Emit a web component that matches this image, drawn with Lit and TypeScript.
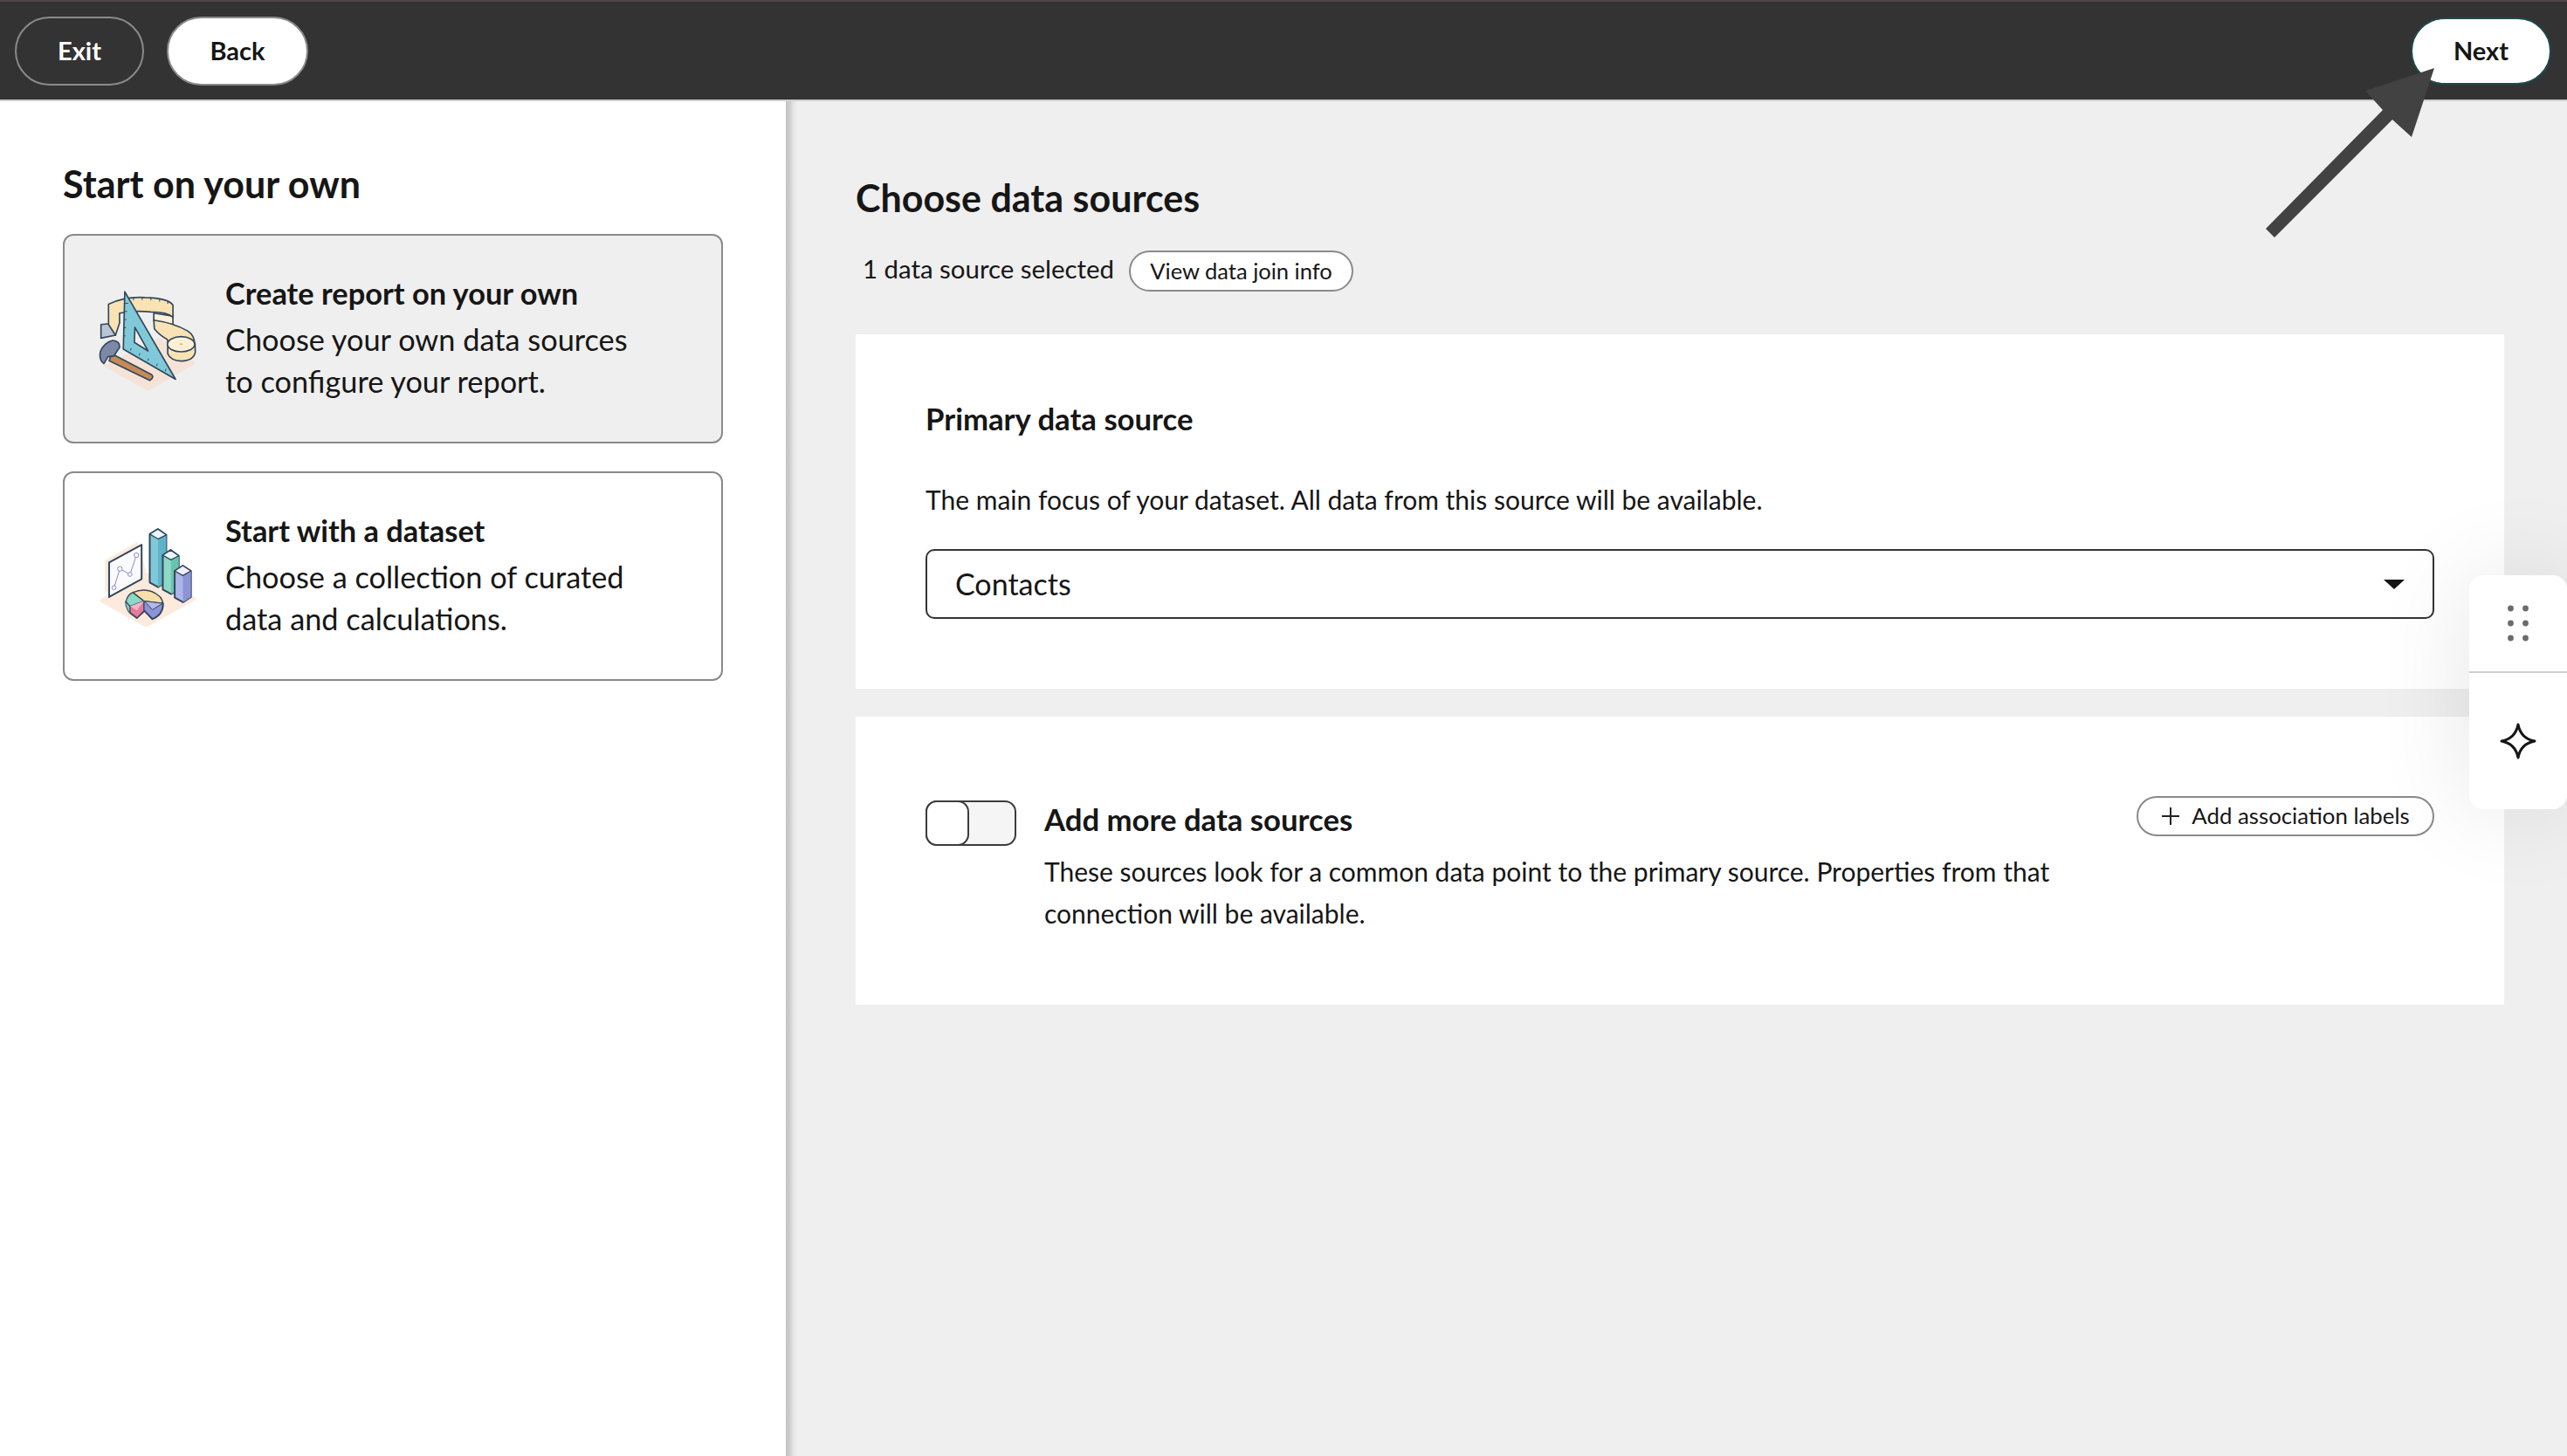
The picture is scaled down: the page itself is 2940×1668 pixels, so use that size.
import { LitElement, html, css, svg } from "lit";
import { customElement } from "lit/decorators.js";

const ink = "#33475b";

const toolsArt = html`<svg class="art" viewBox="160 204 340 360" aria-hidden="true">
  ${svg`
  <path d="M175 478 L370 380 L490 462 Q494 470 486 474 L338 560 Q330 564 322 560 Z" fill="#f5e3d8"/>
  <path d="M168 335 L200 332 L218 372 L168 382 Z" fill="#b9c4d8" stroke="${ink}" stroke-width="5" stroke-linejoin="round"/>
  <path d="M350 296 L416 306 L416 336 L350 322 Z" fill="#fdf1d8" stroke="${ink}" stroke-width="5" stroke-linejoin="round"/>
  <path d="M194 265 Q250 238 320 242 Q400 244 416 268 L416 310 Q396 292 340 292 Q285 286 232 296 L232 330 L218 372 L194 335 Z" fill="#f9e3b4" stroke="${ink}" stroke-width="5" stroke-linejoin="round"/>
  <path d="M280 243 L280 252 M310 242 L310 251 M340 243 L340 252 M370 247 L370 256 M398 255 L398 264" stroke="${ink}" stroke-width="3"/>
  <path d="M350 320 Q420 330 468 358 Q490 374 490 398 L400 400 L396 386 Q370 372 352 350 Z" fill="#f9e3b4" stroke="${ink}" stroke-width="5" stroke-linejoin="round"/>
  <path d="M398 405 L398 436 Q408 460 445 461 Q488 459 493 430 L492 400 Z" fill="#f9e3b4" stroke="${ink}" stroke-width="5" stroke-linejoin="round"/>
  <ellipse cx="444" cy="403" rx="47" ry="26" fill="#fdf1d8" stroke="${ink}" stroke-width="5"/>
  <ellipse cx="444" cy="403" rx="24" ry="12" fill="none" stroke="#f5e3c0" stroke-width="2"/>
  <ellipse cx="444" cy="403" rx="6" ry="3" fill="#e6b94f"/>
  <path d="M250 222 L425 524 L245 420 Z M285 345 L283 397 L330 426 Z" fill="#7fc9d8" fill-rule="evenodd" stroke="${ink}" stroke-width="5" stroke-linejoin="round"/>
  <path d="M262 262 L251 262 M258 290 L248 290 M256 318 L248 318 M254 346 L247 346 M252 374 L246 374 M270 425 L272 417 M300 442 L302 434 M330 460 L332 452 M360 478 L362 470 M390 496 L392 488" stroke="${ink}" stroke-width="3"/>
  <path d="M205 436 L343 508 Q352 518 336 528 L196 460 Z" fill="#c58a55" stroke="${ink}" stroke-width="5" stroke-linejoin="round"/>
  <path d="M166 428 Q178 398 208 390 Q234 392 232 414 L212 444 L192 446 L178 470 Q160 458 166 428 Z" fill="#7c8aa8" stroke="${ink}" stroke-width="5" stroke-linejoin="round"/>
  `}
</svg>`;

const chartArt = html`<svg class="art" viewBox="160 210 340 360" aria-hidden="true">
  ${svg`
  <path d="M168 470 L330 378 L492 462 Q498 468 490 474 L332 562 Q325 567 316 562 L168 480 Q160 474 168 470 Z" fill="#fdeadd"/>
  <path d="M182 335 L295 272 L330 400 L182 446 Z" fill="#fdeadd"/>
  <path d="M196 343 L308 282 L308 400 L196 462 Z" fill="#fbfbff" stroke="${ink}" stroke-width="6" stroke-linejoin="round"/>
  <path d="M213 430 L233 365 L268 384 L290 318" fill="none" stroke="#8d86cf" stroke-width="3"/>
  <g fill="#fff" stroke="#8d86cf" stroke-width="3">
    <circle cx="213" cy="430" r="7"/><circle cx="233" cy="365" r="8"/><circle cx="268" cy="384" r="7"/><circle cx="290" cy="318" r="8"/>
  </g>
  <path d="M336 245 L364 228 L393 248 L393 410 L365 428 L336 412 Z" fill="#7fc9d8" stroke="${ink}" stroke-width="6" stroke-linejoin="round"/>
  <path d="M365 262 L393 248 L393 410 L365 428 Z" fill="#5fb3c8"/>
  <path d="M336 245 L364 228 L393 248 L365 262 Z" fill="#e6f8fb" stroke="${ink}" stroke-width="4" stroke-linejoin="round"/>
  <path d="M381 318 L408 300 L436 320 L436 435 L410 452 L381 436 Z" fill="#8dd8c6" stroke="${ink}" stroke-width="6" stroke-linejoin="round"/>
  <path d="M409 334 L436 320 L436 435 L410 452 Z" fill="#66c4ae"/>
  <path d="M381 318 L408 300 L436 320 L409 334 Z" fill="#e6f8f2" stroke="${ink}" stroke-width="4" stroke-linejoin="round"/>
  <path d="M422 372 L450 354 L478 372 L478 462 L451 480 L422 464 Z" fill="#aeb6e8" stroke="${ink}" stroke-width="6" stroke-linejoin="round"/>
  <path d="M450 388 L478 372 L478 462 L451 480 Z" fill="#8a94d6"/>
  <path d="M422 372 L450 354 L478 372 L450 388 Z" fill="#eef0fb" stroke="${ink}" stroke-width="4" stroke-linejoin="round"/>
  <path d="M254 478 Q254 500 268 516 L292 534 L318 510 L345 538 Q382 524 382 484 L318 476 Z" fill="#8a94d6" stroke="${ink}" stroke-width="6" stroke-linejoin="round"/>
  <path d="M254 478 Q254 500 268 516 L268 494 Z" fill="#7dd0bb"/>
  <path d="M268 494 L316 476 L316 510 L292 534 L268 516 Z" fill="#e8799a" stroke="${ink}" stroke-width="4" stroke-linejoin="round"/>
  <path d="M254 478 Q258 455 278 446 L316 476 L268 494 Z" fill="#8dd8c6" stroke="${ink}" stroke-width="4" stroke-linejoin="round"/>
  <path d="M278 446 Q330 425 370 460 Q380 470 381 484 L316 476 Z" fill="#f7dfa8" stroke="${ink}" stroke-width="4" stroke-linejoin="round"/>
  <path d="M268 494 L316 476 L292 508 Z" fill="#f3b4c6"/>
  <path d="M318 476 L381 484 L345 506 Z" fill="#b3b9e8" stroke="${ink}" stroke-width="3" stroke-linejoin="round"/>
  `}
</svg>`;

@customElement("app-root")
export class AppRoot extends LitElement {
  static styles = css`
    :host {
      display: flex;
      flex-direction: column;
      position: relative;
      width: 100%;
      min-height: 1668px;
      overflow: hidden;
      font-family: "Lato", "Noto Sans", sans-serif;
      color: #161616;
      background: #efefef;
    }
    .topbar {
      box-sizing: border-box;
      height: 116px;
      display: flex;
      align-items: center;
      gap: 26px;
      padding: 0 18px 0 17px;
      background: #333333;
      border-top: 2px solid #4f4545;
      border-bottom: 2px solid #cfcfcf;
    }
    .pill {
      box-sizing: border-box;
      height: 79px;
      padding-bottom: 2px;
      display: flex;
      align-items: center;
      justify-content: center;
      border-radius: 40px;
      border: 2px solid #8a8a8a;
      font-size: 29px;
      font-weight: 700;
      background: #fff;
      color: #161616;
    }
    .exit { width: 148px; background: transparent; color: #fff; }
    .back { width: 162px; }
    .next { width: 161px; margin-left: auto; border-color: #1d4a4f; height: 77px; }
    .main { flex: 1; display: flex; }
    .left {
      box-sizing: border-box;
      width: 900px;
      flex: none;
      padding: 71px 72px 0;
      background: #fff;
    }
    h1 {
      margin: 0;
      font-size: 43px;
      line-height: 48px;
      font-weight: 700;
    }
    .left h1 { margin-bottom: 33px; }
    .option {
      box-sizing: border-box;
      width: 756px;
      height: 240px;
      display: flex;
      align-items: center;
      gap: 32px;
      padding-left: 39px;
      margin-bottom: 32px;
      border: 2px solid #8a8a8a;
      border-radius: 12px;
      background: #fff;
      font-size: 34.3px;
      line-height: 48px;
    }
    .option.selected { background: #efefef; }
    .option-text { padding-bottom: 3px; }
    .art { width: 113px; height: 120px; flex: none; }
    .option b { display: block; font-size: 34.4px; font-weight: 700; margin: -1px 0 5px; }
    .right {
      flex: 1;
      box-sizing: border-box;
      padding: 87px 72px 0 80px;
      background: linear-gradient(90deg, #c4c4c4 0, #cbcbcb 4px, #e6e6e6 9px, #efefef 14px) no-repeat left top / 14px 100%;
    }
    .summary {
      display: flex;
      align-items: center;
      gap: 17px;
      margin: 36px 0 49px;
      padding-left: 8px;
      font-size: 29.4px;
    }
    .summary span { position: relative; top: -3px; }
    .small-pill {
      box-sizing: border-box;
      height: 47px;
      padding-bottom: 2px;
      display: flex;
      align-items: center;
      justify-content: center;
      border: 2px solid #8a8a8a;
      border-radius: 24px;
      background: #fff;
      font-size: 25.5px;
    }
    .join { width: 257px; }
    .panel { background: #fff; }
    .primary {
      box-sizing: border-box;
      height: 406px;
      padding: 73px 80px 0;
    }
    h2 {
      margin: 0;
      font-size: 34.7px;
      line-height: 48px;
      font-weight: 700;
    }
    .primary p {
      margin: 44px 0 33px;
      font-size: 30px;
      line-height: 48px;
    }
    .select {
      box-sizing: border-box;
      height: 80px;
      display: flex;
      align-items: center;
      justify-content: space-between;
      padding: 0 32px 2px 32px;
      border: 2px solid #333;
      border-radius: 10px;
      font-size: 34px;
    }
    .caret {
      width: 0;
      height: 0;
      margin-top: 2px;
      border-left: 12px solid transparent;
      border-right: 12px solid transparent;
      border-top: 11px solid #161616;
    }
    .more {
      box-sizing: border-box;
      height: 330px;
      margin-top: 32px;
      padding: 91px 80px 0;
      display: flex;
      align-items: flex-start;
    }
    .toggle {
      box-sizing: border-box;
      width: 104px;
      height: 52px;
      flex: none;
      margin: 5px 32px 0 0;
      background: #f5f5f5;
      border: 2px solid #3c3c3c;
      border-radius: 13px;
      display: flex;
    }
    .knob {
      box-sizing: content-box;
      width: 46px;
      margin: -2px 0 -2px -2px;
      background: #fff;
      border: 2px solid #3c3c3c;
      border-radius: 13px;
    }
    .more-text { flex: 1; padding-top: 3px; }
    .more-text p {
      margin: 11px 0 0;
      font-size: 30px;
      line-height: 48px;
    }
    .assoc {
      width: 341px;
      height: 46px;
      gap: 13px;
      flex: none;
      font-size: 25.8px;
    }
    .assoc svg { width: 22px; height: 22px; margin-top: 2px; }
    .dock {
      position: absolute;
      left: 2828px;
      top: 659px;
      width: 112px;
      height: 268px;
      background: #fff;
      border-radius: 16px;
      box-shadow: 0 0 110px rgba(0, 0, 0, 0.1);
      display: flex;
      flex-direction: column;
    }
    .dock-cell {
      display: flex;
      align-items: center;
      justify-content: center;
    }
    .grip { height: 110px; border-bottom: 2px solid #cfcfcf; }
    .spark { flex: 1; }
    .arrow {
      position: absolute;
      left: 2590px;
      top: 70px;
      width: 205px;
      height: 210px;
    }
  `;

  render() {
    return html`
      <header class="topbar">
        <div class="pill exit">Exit</div>
        <div class="pill back">Back</div>
        <div class="pill next">Next</div>
      </header>
      <div class="main">
        <section class="left">
          <h1>Start on your own</h1>
          <div class="option selected">
            ${toolsArt}
            <div class="option-text"><b>Create report on your own</b>Choose your own data sources<br />to configure your report.</div>
          </div>
          <div class="option">
            ${chartArt}
            <div class="option-text"><b>Start with a dataset</b>Choose a collection of curated<br />data and calculations.</div>
          </div>
        </section>
        <section class="right">
          <h1>Choose data sources</h1>
          <div class="summary">
            <span>1 data source selected</span>
            <div class="small-pill join">View data join info</div>
          </div>
          <div class="panel primary">
            <h2>Primary data source</h2>
            <p>The main focus of your dataset. All data from this source will be available.</p>
            <div class="select">Contacts<i class="caret"></i></div>
          </div>
          <div class="panel more">
            <div class="toggle"><div class="knob"></div></div>
            <div class="more-text">
              <h2>Add more data sources</h2>
              <p>These sources look for a common data point to the primary source. Properties from that<br />connection will be available.</p>
            </div>
            <div class="small-pill assoc">
              <svg viewBox="0 0 22 22"><path d="M11 1V21M1 11H21" stroke="#222" stroke-width="2" fill="none" /></svg>
              Add association labels
            </div>
          </div>
        </section>
      </div>
      <aside class="dock">
        <div class="dock-cell grip">
          <svg width="24" height="42" viewBox="0 0 24 42" fill="#6b6b6b">
            <circle cx="3.5" cy="4" r="3.4" /><circle cx="20.5" cy="4" r="3.4" />
            <circle cx="3.5" cy="21" r="3.4" /><circle cx="20.5" cy="21" r="3.4" />
            <circle cx="3.5" cy="38" r="3.4" /><circle cx="20.5" cy="38" r="3.4" />
          </svg>
        </div>
        <div class="dock-cell spark">
          <svg width="42" height="42" viewBox="0 0 42 42">
            <path d="M21 2 Q24 18 40 21 Q24 24 21 40 Q18 24 2 21 Q18 18 21 2 Z" fill="none" stroke="#161616" stroke-width="3" stroke-linejoin="round" />
          </svg>
        </div>
      </aside>
      <svg class="arrow" viewBox="2590 70 205 210" aria-hidden="true">
        <path d="M2788 78 L2709 104 L2729 126 L2595 262 L2605 272 L2740 137 L2762 157 Z" fill="#424242" />
      </svg>
    `;
  }
}
